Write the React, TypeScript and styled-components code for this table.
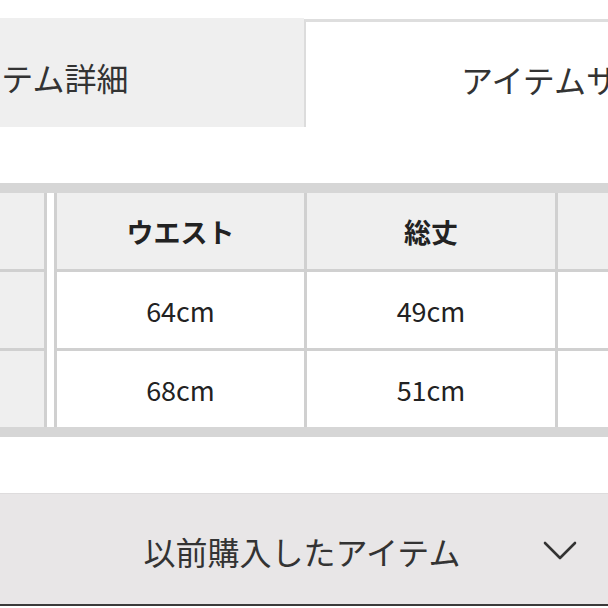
import React from "react";
import styled, { createGlobalStyle } from "styled-components";

const Global = createGlobalStyle`
  html, body {
    margin: 0;
    padding: 0;
    background: #ffffff;
    overflow: hidden;
  }
  body {
    font-family: "Noto Sans CJK JP", "Noto Sans", sans-serif;
    color: #222;
  }
`;

const Page = styled.div`
  width: 608px;
  height: 608px;
  overflow: hidden;
  display: flex;
  flex-direction: column;
  background: #fff;
`;

const Tabs = styled.div`
  display: flex;
  margin-top: 18px;
  margin-left: -236px;
  height: 109px;
  flex-shrink: 0;
`;

const Tab = styled.div<{ $active?: boolean }>`
  width: ${(p) => (p.$active ? "532px" : "540px")};
  flex-shrink: 0;
  box-sizing: border-box;
  display: flex;
  align-items: center;
  justify-content: center;
  padding-top: 8px;
  font-size: 32px;
  color: #333;
  background: ${(p) => (p.$active ? "#ffffff" : "#efefef")};
  border-top: ${(p) => (p.$active ? "3px solid #dedede" : "none")};
  border-left: ${(p) => (p.$active ? "2px solid #dcdcdc" : "none")};
  margin-top: ${(p) => (p.$active ? "1px" : "0")};
`;

const Table = styled.div`
  display: flex;
  margin-top: 56px;
  border-top: 10px solid #d6d6d6;
  border-bottom: 10px solid #d6d6d6;
  background: #fff;
  flex-shrink: 0;
  gap: 7px;
`;

const Grid = styled.div<{ $cols: string }>`
  display: grid;
  grid-template-columns: ${(p) => p.$cols};
  grid-auto-rows: 76px;
  gap: 3px;
  background: #d0d0d0;
  flex-shrink: 0;
`;

const FixedGrid = styled(Grid)`
  border-right: 3px solid #d0d0d0;
`;

const ScrollGrid = styled(Grid)`
  border-left: 3px solid #d0d0d0;
`;

const Cell = styled.div<{ $head?: boolean }>`
  display: flex;
  align-items: center;
  justify-content: center;
  background: ${(p) => (p.$head ? "#efefef" : "#ffffff")};
  font-size: 27px;
  font-weight: ${(p) => (p.$head ? 700 : 400)};
  color: #222;
`;

const FixedCell = styled(Cell)`
  background: #efefef;
`;

const History = styled.div`
  margin-top: 56px;
  height: 113px;
  flex-shrink: 0;
  display: grid;
  grid-template-columns: 1fr auto 1fr;
  align-items: center;
  background: #e8e6e7;
  border-top: 1px solid #dedcdd;
  box-sizing: border-box;
  border-bottom: 2px solid #3a3a3a;
`;

const HistoryLabel = styled.span`
  grid-column: 2;
  font-size: 32px;
  color: #333;
  padding-top: 4px;
  margin-right: 4px;
`;

const Chevron = styled.svg`
  grid-column: 3;
  justify-self: end;
  margin-right: 31px;
  margin-top: 4px;
`;

const heads = ["ウエスト", "総丈", ""];
const rows = [
  ["64cm", "49cm", ""],
  ["68cm", "51cm", ""],
];

export default function App() {
  return (
    <Page>
      <Global />
      <Tabs>
        <Tab>アイテム詳細</Tab>
        <Tab $active>アイテムサイズ</Tab>
      </Tabs>
      <Table>
        <FixedGrid $cols="44px">
          <FixedCell />
          <FixedCell />
          <FixedCell />
        </FixedGrid>
        <ScrollGrid $cols="247px 248px 247px">
          {heads.map((h, i) => (
            <Cell key={`h${i}`} $head>
              {h}
            </Cell>
          ))}
          {rows.map((r, ri) =>
            r.map((c, ci) => <Cell key={`${ri}-${ci}`}>{c}</Cell>)
          )}
        </ScrollGrid>
      </Table>
      <History>
        <HistoryLabel>以前購入したアイテム</HistoryLabel>
        <Chevron width="34" height="20" viewBox="0 0 34 20">
          <path
            d="M2 2 L17 17 L32 2"
            fill="none"
            stroke="#333"
            strokeWidth="2.6"
            strokeLinecap="round"
            strokeLinejoin="round"
          />
        </Chevron>
      </History>
    </Page>
  );
}
